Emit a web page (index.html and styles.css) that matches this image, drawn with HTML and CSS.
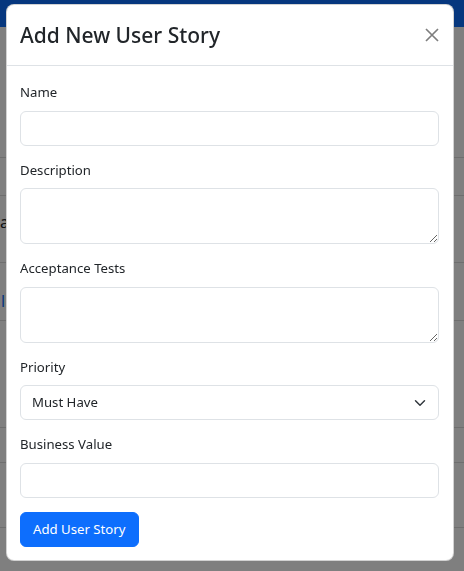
FILE: index.html
```html
<!DOCTYPE html>
<html lang="en">
<head>
<meta charset="utf-8">
<title>Add New User Story</title>
<link rel="stylesheet" href="styles.css">
</head>
<body>
<div class="page">
  <div class="navbar"></div>
  <div class="rows">
    <div class="row r1"></div>
    <div class="row r2"></div>
    <div class="row r3"><span class="cell-text">a</span></div>
    <div class="row r4"><span class="cell-link">l</span></div>
    <div class="row r5"></div>
    <div class="row r6"></div>
    <div class="row r7"></div>
  </div>
</div>
<div class="backdrop"></div>
<div class="modal">
  <div class="modal-header">
    <h5 class="modal-title">Add New User Story</h5>
    <button class="btn-close" type="button" aria-label="Close">
      <svg width="14" height="14" viewBox="0 0 14 14"><path d="M1 1L13 13M13 1L1 13" stroke="#000" stroke-width="1.7" fill="none"/></svg>
    </button>
  </div>
  <div class="modal-body">
    <div class="group">
      <label class="form-label">Name</label>
      <input class="form-control" type="text">
    </div>
    <div class="group">
      <label class="form-label">Description</label>
      <textarea class="form-control area" rows="2"></textarea>
    </div>
    <div class="group">
      <label class="form-label">Acceptance Tests</label>
      <textarea class="form-control area" rows="2"></textarea>
    </div>
    <div class="group">
      <label class="form-label">Priority</label>
      <select class="form-select">
        <option>Must Have</option>
        <option>Should Have</option>
        <option>Could Have</option>
        <option>Won't Have</option>
      </select>
    </div>
    <div class="group">
      <label class="form-label">Business Value</label>
      <input class="form-control" type="text">
    </div>
    <button class="btn-primary" type="button">Add User Story</button>
  </div>
</div>
</body>
</html>
```

FILE: styles.css
```css
* { box-sizing: border-box; }
html, body { margin: 0; padding: 0; }
body {
  font-family: "Noto Sans", "Open Sans", sans-serif;
  font-size: 13.2px;
  line-height: 1.5;
  color: #212529;
  background: #fff;
  height: 571px;
  overflow: hidden;
}
.page { position: relative; }
.navbar { height: 27px; background: #0d6efd; }
.rows { display: flex; flex-direction: column; }
.row { border-bottom: 1px solid #dcdcdc; font-size: 16px; line-height: 24px; white-space: nowrap; }
.r1 { height: 131px; }
.r2 { height: 38px; }
.r3 { height: 67px; padding-top: 14px; }
.r4 { height: 58px; padding-top: 26px; }
.r5 { height: 107px; }
.r6 { height: 35px; }
.r7 { height: 65px; }
.cell-text { color: #212529; }
.cell-link { margin-left: 1px; color: #0d6efd; }
.backdrop {
  position: fixed; inset: 0;
  background: rgba(0,0,0,0.5);
}
.modal {
  position: absolute;
  left: 6px; top: 4px;
  width: 448px;
  background: #fff;
  border: 1px solid rgba(0,0,0,0.175);
  border-radius: 8px;
  display: flex; flex-direction: column;
}
.modal-header {
  display: flex; align-items: center; justify-content: space-between;
  padding: 15px 14px 15px 13px;
  border-bottom: 1px solid #dee2e6;
}
.modal-title {
  margin: 0;
  font-size: 21px; line-height: 30px; font-weight: 500;
  color: #212529;
}
.btn-close {
  border: 0; background: none; padding: 0;
  width: 14px; height: 14px; margin-right: 0;
  opacity: 0.5; display: flex; cursor: pointer;
}
.modal-body { padding: 16px 14px 13px 13px; display: flex; flex-direction: column; align-items: flex-start; }
.group { width: 100%; margin-bottom: 14px; display: flex; flex-direction: column; }
.form-label { display: block; line-height: 21px; margin-bottom: 7.5px; color: #212529; }
.form-control, .form-select {
  display: block; width: 100%;
  font: inherit; font-size: 13.2px; line-height: 21px;
  color: #212529;
  padding: 6px 11px;
  border: 1px solid #dee2e6;
  border-radius: 6px;
  background-color: #fff;
  margin: 0;
}
.area { height: 56px; resize: vertical; }
.form-select {
  appearance: none; -webkit-appearance: none;
  padding-right: 36px;
  background-image: url("data:image/svg+xml,%3csvg xmlns='http://www.w3.org/2000/svg' viewBox='0 0 16 16'%3e%3cpath fill='none' stroke='%23343a40' stroke-linecap='round' stroke-linejoin='round' stroke-width='2' d='m2 5 6 6 6-6'/%3e%3c/svg%3e");
  background-repeat: no-repeat;
  background-position: right 12px center;
  background-size: 12px 12px;
}
.btn-primary {
  font: inherit; font-size: 13.2px; line-height: 21px;
  color: #fff; background: #0d6efd;
  border: 1px solid #0d6efd; border-radius: 6px;
  padding: 6px 12px;
  cursor: pointer;
}
```
